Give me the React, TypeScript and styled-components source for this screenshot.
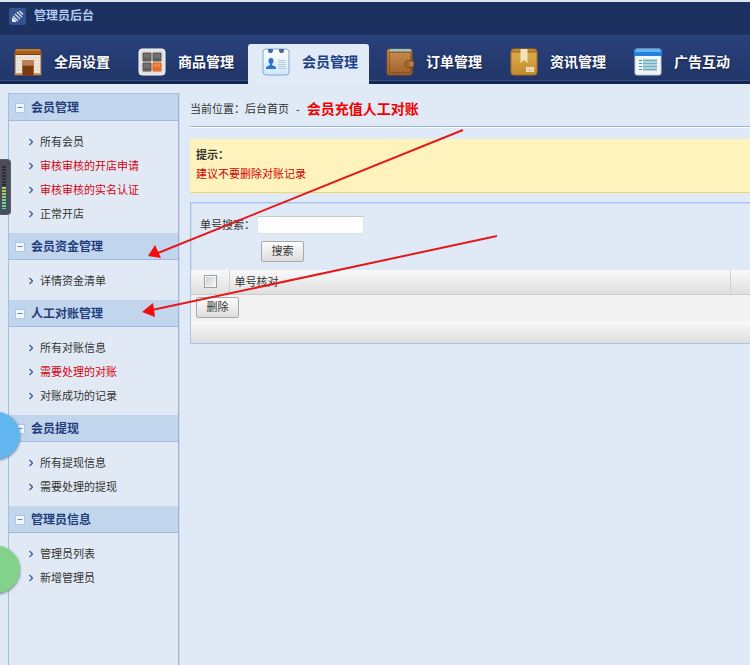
import React, { useState } from "react";
import styled, { createGlobalStyle, css } from "styled-components";

const GlobalStyle = createGlobalStyle`
  *, *::before, *::after { box-sizing: border-box; }
  body {
    margin: 0;
    background: #dfeaf6;
    color: #333;
    font: 11px/24px "Liberation Sans", "Noto Sans CJK SC", sans-serif;
  }
  a { color: inherit; text-decoration: none; }
  button, input { font: inherit; color: inherit; }
`;

const Page = styled.div`
  position: relative;
  display: flex;
  flex-direction: column;
  min-height: 100vh;
  overflow: hidden;
  border-top: 2px solid #dfe6ef;
`;

const Header = styled.header`
  background: #1d3160;
`;

const TitleBar = styled.div`
  display: flex;
  align-items: center;
  gap: 8px;
  height: 33px;
  padding: 0 9px 5px;
  color: #b3cbf0;
  font-size: 12px;
  font-weight: bold;
`;

const Nav = styled.nav`
  display: flex;
  height: 49px;
  border-top: 1px solid #2d4784;
  border-bottom: 3px solid #142550;
  background: linear-gradient(#28407b, #223668);
  box-shadow: inset 0 -1px #35508c;
`;

const NavLink = styled.a<{ $active?: boolean }>`
  display: flex;
  flex: none;
  align-items: center;
  gap: 12px;
  width: 124px;
  height: 48px;
  padding: 4px 0 0 14px;
  color: #fff;
  font-size: 14px;
  font-weight: bold;
  text-shadow: 0 1px 2px #101e45;
  white-space: nowrap;
  svg { flex: none; }
  ${(p) =>
    p.$active &&
    css`
      width: 121px;
      height: 40px;
      margin: 8px 3px 0 0;
      padding: 0 0 4px 14px;
      border-radius: 3px 3px 0 0;
      background: #e1ebf7;
      color: #1c3f84;
      text-shadow: none;
    `}
`;

const Body = styled.div`
  display: flex;
  flex: 1;
  gap: 11px;
  padding: 9px 0 0 8px;
`;

const Sidebar = styled.aside`
  flex: none;
  width: 171px;
  border: 1px solid #a5bfe0;
  border-right-color: #9fb5d5;
  border-bottom: 0;
  background: #e1eaf4;
  box-shadow: 1px 0 #c9d8ea;
`;

const GroupHead = styled.h2`
  display: flex;
  align-items: center;
  height: 27px;
  margin: 0;
  padding-top: 2px;
  border-bottom: 1px solid #9fb9df;
  background: #c1d5ed;
  color: #223d7c;
  font-size: 12px;
`;

const Toggle = styled.button`
  display: flex;
  align-items: center;
  gap: 6px;
  width: 100%;
  padding: 0 0 0 6px;
  border: 0;
  background: none;
  font-weight: bold;
  text-align: left;
  cursor: pointer;
`;

const GroupList = styled.ul`
  margin: 0;
  padding: 9px 0 7px 20px;
  list-style: none;
`;

const GroupLink = styled.a<{ $alert?: boolean }>`
  display: flex;
  align-items: center;
  gap: 7px;
  height: 24px;
  color: ${(p) => (p.$alert ? "#d8000f" : "#333")};
`;

const Main = styled.main`
  flex: 1;
  min-width: 0;
`;

const Breadcrumb = styled.div`
  display: flex;
  align-items: center;
  gap: 7px;
  height: 34px;
  padding-bottom: 1px;
  border-bottom: 1px solid #91b2df;
  box-shadow: 0 1px #fff;
  white-space: nowrap;
`;

const Current = styled.h1`
  margin: 0;
  color: #f20000;
  font-size: 14px;
`;

const Notice = styled.section`
  margin: 12px 0 9px;
  padding: 7px 6px 8px;
  border-bottom: 1px solid #eedb66;
  background: #fef3bd;
  color: #d40000;
  line-height: 19px;
`;

const NoticeTitle = styled.strong`
  display: block;
  color: #333;
`;

const Panel = styled.section`
  border: 1px solid #a9c2e7;
  border-right: 0;
  box-shadow: inset 1px 1px #cbdcf1;
`;

const SearchForm = styled.form`
  padding: 13px 9px 8px;
`;

const Field = styled.div`
  display: flex;
  align-items: center;
  height: 18px;
  margin-bottom: 7px;
`;

const FieldLabel = styled.label`
  width: 57px;
  padding-bottom: 1px;
  white-space: nowrap;
`;

const TextInput = styled.input`
  width: 107px;
  height: 18px;
  padding: 0 3px;
  border: 1px solid #dbe3ec;
  border-top-color: #c1c9d2;
  background: #fff;
`;

const Button = styled.button`
  display: block;
  width: 43px;
  height: 21px;
  padding: 0;
  border: 1px solid #a9a9a9;
  border-radius: 2px;
  background: linear-gradient(#fcfcfc, #dedede);
  line-height: 19px;
  cursor: pointer;
`;

const SearchButton = styled(Button)`
  margin-left: 61px;
`;

const Table = styled.table`
  width: 100%;
  border-collapse: collapse;
  table-layout: fixed;
  line-height: 18px;
`;

const HeadCell = styled.th<{ $width?: number }>`
  width: ${(p) => (p.$width ? `${p.$width}px` : "auto")};
  height: 24px;
  padding: 0 0 0 5px;
  border-right: 1px solid #cfcfcf;
  border-bottom: 1px solid #cdcdcd;
  background: linear-gradient(#f9f9f9, #dfdfdf);
  font-weight: normal;
  text-align: left;
  &:last-child { border-right: 0; }
`;

const CheckBox = styled.input`
  appearance: none;
  display: block;
  width: 13px;
  height: 13px;
  margin: 0 0 0 8px;
  border: 1px solid #9b9ea3;
  background: linear-gradient(135deg, #c9ccd0, #f7f7f7);
  box-shadow: inset 0 0 0 1px #f6f6f6;
  &:checked { background: #4a6ba8; }
`;

const ActionCell = styled.td`
  height: 27px;
  padding: 0 5px;
  background: #f2f2f2;
`;

const FootCell = styled.td`
  height: 22px;
  padding: 0;
  background: linear-gradient(#f9f9f9, #dfdfdf);
`;

const ArrowLayer = styled.svg`
  position: absolute;
  top: -2px;
  left: 0;
  pointer-events: none;
`;

const Meter = styled.div`
  position: absolute;
  top: 157px;
  left: 0;
  width: 11px;
  height: 56px;
  padding: 6px 4px 5px 2px;
  border: 1px solid #5b5e68;
  border-left: 0;
  border-radius: 0 4px 4px 0;
  background: #4b4e59;
`;

const MeterBars = styled.div`
  height: 100%;
  background:
    repeating-linear-gradient(transparent 0 2px, #4b4e59 2px 3px),
    linear-gradient(#2a2e39 0 50%, #b5cf4c 50%, #4fd4b5);
`;

const Bubble = styled.button<{ $color: string; $top: number }>`
  position: absolute;
  top: ${(p) => p.$top}px;
  left: -27px;
  width: 47px;
  height: 47px;
  padding: 0;
  border: 0;
  border-radius: 50%;
  background: ${(p) => p.$color};
  box-shadow: 0 1px 3px #65788c;
`;

const LogoIcon = () => (
  <svg width="17" height="17" viewBox="0 0 17 17" aria-hidden="true">
    <rect width="17" height="17" rx="2" fill="#34528d" />
    <path d="M3 9.500v4.500h4.500L6 11z" fill="#dceaff" />
    <path d="M4 8l5 5M6 6l5 5M8 4l5 5M10.500 3l3.500 3.500" stroke="#dceaff" strokeWidth="1.200" />
  </svg>
);

const StoreIcon = () => (
  <svg width="28" height="28" viewBox="0 0 28 28" aria-hidden="true">
    <path d="M1 5h26v22H1z" fill="#eee6dc" stroke="#8f5a2c" />
    <path d="M2 10h24M2 13h24M2 16h24M2 19h24M2 22h24" stroke="#dfd5c8" />
    <path d="M2 1h24l2 6H0z" fill="#a85f17" />
    <path d="M2 1h24l1 2H1z" fill="#c47c2c" />
    <path d="M1 6.500h26" stroke="#7a430f" />
    <path d="M8 12h12v15H8z" fill="#a8683a" />
    <path d="M8 12h12v5H8z" fill="#b98256" />
    <path d="M9 18h10v9H9z" fill="#7c3a0a" />
    <path d="M1 25h7v2H1zM20 25h7v2h-7z" fill="#c9935d" />
  </svg>
);

const GridIcon = () => (
  <svg width="28" height="28" viewBox="0 0 28 28" aria-hidden="true">
    <rect x="1" y="1" width="26" height="26" rx="3" fill="#e1e2e2" stroke="#f4f4f4" />
    <path d="M5 5h8v8H5zM15 5h8v8h-8zM5 15h8v8H5z" fill="#76706c" stroke="#56504d" />
    <path d="M6 10h6v2H6zM16 10h6v2h-6zM6 20h6v2H6z" fill="#625c59" />
    <path d="M15 15h8v8h-8z" fill="#f58642" stroke="#d85818" />
    <path d="M16 19h6v3h-6z" fill="#ec6a22" />
  </svg>
);

const MemberIcon = () => (
  <svg width="28" height="28" viewBox="0 0 28 28" aria-hidden="true">
    <defs>
      <linearGradient id="memberCard" x1="0" y1="0" x2="0" y2="1">
        <stop stopColor="#fff" />
        <stop offset="1" stopColor="#cee7fb" />
      </linearGradient>
    </defs>
    <rect x="1" y="1" width="26" height="26" rx="3" fill="url(#memberCard)" stroke="#86a9d0" />
    <path d="M6 1h5v2l-1 2H7L6 3zM17 1h5v2l-1 2h-3l-1-2z" fill="#496b9f" />
    <ellipse cx="9" cy="13" rx="2.500" ry="3" fill="#2a72cf" />
    <path d="M8 15h2v2l4 2v2H4v-2l4-2z" fill="#2a72cf" />
    <path d="M16 12.500h8M16 14.500h8M16 16.500h8M16 18.500h8M16 20.500h8" stroke="#b4c9de" />
  </svg>
);

const WalletIcon = () => (
  <svg width="28" height="28" viewBox="0 0 28 28" aria-hidden="true">
    <defs>
      <linearGradient id="walletLeather" x1="0" y1="0" x2="0" y2="1">
        <stop stopColor="#c98f50" />
        <stop offset="1" stopColor="#a1602a" />
      </linearGradient>
    </defs>
    <rect x="1" y="1" width="25" height="26" rx="2" fill="url(#walletLeather)" stroke="#8a5423" />
    <path d="M4 1h21v2H4z" fill="#7fcbe4" />
    <path d="M3.500 4.500h21v20h-21z" fill="none" stroke="#7a4719" strokeDasharray="2 1" />
    <path d="M28 13h-7q-2 0-2 3t2 3h7z" fill="#bd8144" stroke="#6b3d16" />
    <circle cx="22" cy="16" r="1" fill="#5c361e" />
  </svg>
);

const BoxIcon = () => (
  <svg width="28" height="28" viewBox="0 0 28 28" aria-hidden="true">
    <defs>
      <linearGradient id="boxCardboard" x1="0" y1="0" x2="0" y2="1">
        <stop stopColor="#deb052" />
        <stop offset="1" stopColor="#c48a2c" />
      </linearGradient>
    </defs>
    <rect x="1" y="1" width="26" height="26" rx="3" fill="url(#boxCardboard)" stroke="#a87022" />
    <path d="M3 1h22l2 3H1z" fill="#c08a2c" />
    <path d="M1 4h26" stroke="#9a651b" />
    <path d="M10.500 1h7v14L14 12l-3.500 3z" fill="#f3e3b8" />
    <path d="M16 19h8v5h-8z" fill="#efe0bd" />
    <path d="M17 22h6M20 20v4" stroke="#d8c090" />
  </svg>
);

const WindowIcon = () => (
  <svg width="28" height="28" viewBox="0 0 28 28" aria-hidden="true">
    <rect x="1" y="1" width="26" height="26" rx="2" fill="#f3f6f7" stroke="#bfccd6" />
    <path d="M0 8V3q0-2 2-2h24q2 0 2 2v5z" fill="#2581df" />
    <path d="M2 1h24l1 3H1z" fill="#60b5f7" />
    <path d="M5 12.500h3M5 15.500h3M5 18.500h3M5 21.500h3" stroke="#408caa" />
    <path d="M9 12.500h14M9 15.500h14M9 18.500h14M9 21.500h14" stroke="#71afc3" strokeWidth="2" />
  </svg>
);

const MinusBox = ({ open }: { open: boolean }) => (
  <svg width="10" height="10" viewBox="0 0 10 10" aria-hidden="true">
    <rect x="0.500" y="0.500" width="9" height="9" fill="#eff7ff" stroke="#acc6e5" />
    <path d={open ? "M2.500 4.500h5" : "M2.500 4.500h5M5 2v5"} stroke="#6286b8" />
  </svg>
);

const Chevron = () => (
  <svg width="4" height="8" viewBox="0 0 4 8" aria-hidden="true">
    <path d="M0.500 1l3 3-3 3" fill="none" stroke="#3c5c98" strokeWidth="1.300" />
  </svg>
);

const navigation = [
  { label: "全局设置", Icon: StoreIcon },
  { label: "商品管理", Icon: GridIcon },
  { label: "会员管理", Icon: MemberIcon, active: true },
  { label: "订单管理", Icon: WalletIcon },
  { label: "资讯管理", Icon: BoxIcon },
  { label: "广告互动", Icon: WindowIcon },
];

type MenuItem = { label: string; alert?: boolean };

const groups: { title: string; items: MenuItem[] }[] = [
  {
    title: "会员管理",
    items: [
      { label: "所有会员" },
      { label: "审核审核的开店申请", alert: true },
      { label: "审核审核的实名认证", alert: true },
      { label: "正常开店" },
    ],
  },
  { title: "会员资金管理", items: [{ label: "详情资金清单" }] },
  {
    title: "人工对账管理",
    items: [{ label: "所有对账信息" }, { label: "需要处理的对账", alert: true }, { label: "对账成功的记录" }],
  },
  { title: "会员提现", items: [{ label: "所有提现信息" }, { label: "需要处理的提现" }] },
  { title: "管理员信息", items: [{ label: "管理员列表" }, { label: "新增管理员" }] },
];

function MenuGroup({ title, items }: { title: string; items: MenuItem[] }) {
  const [open, setOpen] = useState(true);
  return (
    <section>
      <GroupHead>
        <Toggle type="button" aria-expanded={open} onClick={() => setOpen(!open)}>
          <MinusBox open={open} />
          {title}
        </Toggle>
      </GroupHead>
      {open && (
        <GroupList>
          {items.map((item) => (
            <li key={item.label}>
              <GroupLink href="#" $alert={item.alert}>
                <Chevron />
                {item.label}
              </GroupLink>
            </li>
          ))}
        </GroupList>
      )}
    </section>
  );
}

export default function App() {
  return (
    <>
      <GlobalStyle />
      <Page>
        <Header>
          <TitleBar>
            <LogoIcon />
            管理员后台
          </TitleBar>
          <Nav>
            {navigation.map(({ label, Icon, active }) => (
              <NavLink key={label} href="#" $active={active} aria-current={active ? "page" : undefined}>
                <Icon />
                {label}
              </NavLink>
            ))}
          </Nav>
        </Header>
        <Body>
          <Sidebar>
            {groups.map((group) => (
              <MenuGroup key={group.title} {...group} />
            ))}
          </Sidebar>
          <Main>
            <Breadcrumb>
              <span>当前位置：<a href="#">后台首页</a></span>
              <span>-</span>
              <Current>会员充值人工对账</Current>
            </Breadcrumb>
            <Notice>
              <NoticeTitle>提示：</NoticeTitle>
              建议不要删除对账记录
            </Notice>
            <Panel>
              <SearchForm onSubmit={(event) => event.preventDefault()}>
                <Field>
                  <FieldLabel htmlFor="order-number">单号搜索：</FieldLabel>
                  <TextInput id="order-number" type="text" />
                </Field>
                <SearchButton type="submit">搜索</SearchButton>
              </SearchForm>
              <Table>
                <thead>
                  <tr>
                    <HeadCell $width={38}>
                      <CheckBox type="checkbox" aria-label="全选" />
                    </HeadCell>
                    <HeadCell>单号核对</HeadCell>
                    <HeadCell $width={20} />
                  </tr>
                </thead>
                <tbody>
                  <tr>
                    <ActionCell colSpan={3}>
                      <Button type="button">删除</Button>
                    </ActionCell>
                  </tr>
                </tbody>
                <tfoot>
                  <tr>
                    <FootCell colSpan={3} />
                  </tr>
                </tfoot>
              </Table>
            </Panel>
          </Main>
        </Body>
        <Meter>
          <MeterBars />
        </Meter>
        <Bubble type="button" aria-label="蓝色浮标" $color="#62b6ef" $top={410} />
        <Bubble type="button" aria-label="绿色浮标" $color="#83d28b" $top={544} />
        <ArrowLayer width="500" height="330" viewBox="0 0 500 330" aria-hidden="true">
          <g stroke="#e5191c" strokeWidth="2" fill="#f00d10">
            <path d="M463 130L158 253M497 236L152 310" />
            <path d="M148 256l7-11 6 13zM142 312l11-9 2 14z" stroke="none" />
          </g>
        </ArrowLayer>
      </Page>
    </>
  );
}
